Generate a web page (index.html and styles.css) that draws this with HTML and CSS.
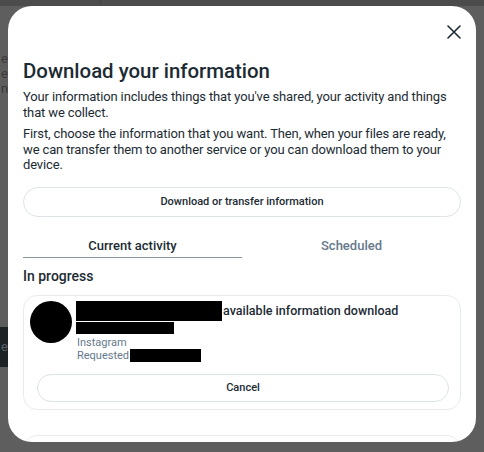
FILE: index.html
```html
<!DOCTYPE html>
<html>
<head>
<meta charset="utf-8">
<link rel="stylesheet" href="styles.css">
</head>
<body>
<div class="page">
  <div class="topbar"><span class="topbar-line"></span></div>
  <div class="behind">
    <div class="behind-text">
      <div>er</div>
      <div>ec</div>
      <div>nd</div>
    </div>
    <div class="behind-block">er</div>
  </div>
</div>
<div class="modal">
  <div class="modal-head">
    <button class="close" aria-label="Close">
      <svg width="14" height="14" viewBox="0 0 14 14"><path d="M1 1L13 13M13 1L1 13" stroke="#1c2b33" stroke-width="1.6" stroke-linecap="round"/></svg>
    </button>
  </div>
  <h1 class="title">Download your information</h1>
  <p class="para">Your information includes things that you've shared, your activity and things that we collect.</p>
  <p class="para">First, choose the information that you want. Then, when your files are ready, we can transfer them to another service or you can download them to your device.</p>
  <button class="pill main-btn">Download or transfer information</button>
  <div class="tabs">
    <div class="tab active">Current activity</div>
    <div class="tab">Scheduled</div>
  </div>
  <div class="section-title">In progress</div>
  <div class="card">
    <div class="card-top">
      <div class="avatar"></div>
      <div class="info">
        <div class="line1"><span class="redact r1"></span><span class="line1-text">available information download</span></div>
        <span class="redact r2"></span>
        <div class="meta first">Instagram</div>
        <div class="meta req">Requested<span class="redact r3"></span></div>
      </div>
    </div>
    <button class="pill cancel-btn">Cancel</button>
  </div>
  <div class="card next-card"></div>
</div>
</body>
</html>
```

FILE: styles.css
```css
html, body {
  margin: 0;
  padding: 0;
}
body {
  width: 484px;
  height: 452px;
  overflow: hidden;
  background: #5e5e5e;
  font-family: Roboto, "Noto Sans", sans-serif;
  color: #1c2b33;
  position: relative;
}
.page {
  height: 452px;
  display: flex;
  flex-direction: column;
}
.topbar {
  height: 6px;
  background: #4c4c4c;
}
.topbar-line {
  display: block;
  width: 1px;
  height: 6px;
  margin-left: 100px;
  background: #444;
}
.behind {
  flex: 1;
  display: flex;
  flex-direction: column;
}
.behind-text {
  margin-top: 45px;
  padding-left: 1px;
  font-size: 13px;
  line-height: 15px;
  color: #3a3a3a;
}
.behind-block {
  margin-top: 231px;
  width: 30px;
  height: 40px;
  background: #1e2326;
  color: #55606a;
  font-size: 13px;
  line-height: 40px;
  padding-left: 1px;
}
.modal {
  position: absolute;
  top: 6px;
  left: 8px;
  width: 468px;
  height: 436px;
  background: #fff;
  border-radius: 24px;
  overflow: hidden;
  box-sizing: border-box;
  padding: 0 15px;
}
.modal-head {
  height: 53px;
  display: flex;
  justify-content: flex-end;
  align-items: flex-start;
}
.close {
  border: 0;
  background: none;
  padding: 0;
  width: 14px;
  height: 14px;
  margin-top: 19px;
  margin-right: 0;
  cursor: pointer;
}
.close svg { display: block; }
.title {
  margin: 0;
  font-size: 20.4px;
  line-height: 24px;
  font-weight: 500;
  letter-spacing: 0;
}
.para {
  margin: 6px 0 0;
  font-size: 13px;
  line-height: 15.5px;
  letter-spacing: -0.14px;
}
.para + .para {
  margin-top: 6px;
}
.pill {
  display: flex;
  align-items: center;
  justify-content: center;
  width: 100%;
  border: 1px solid #dde3e9;
  border-radius: 999px;
  background: #fff;
  font-family: inherit;
  color: #1c2b33;
  font-size: 11px;
  font-weight: 500;
  box-sizing: border-box;
  padding: 0;
}
.main-btn {
  height: 30px;
  margin-top: 14px;
}
.tabs {
  display: flex;
  margin-top: 13px;
}
.tab {
  flex: 1;
  text-align: center;
  font-size: 13px;
  font-weight: 500;
  line-height: 18px;
  padding: 7px 0 2px;
  color: #65788b;
}
.tab.active {
  color: #1c2b33;
  border-bottom: 1px solid #8a949c;
}
.section-title {
  margin-top: 8px;
  font-size: 14px;
  font-weight: 500;
  line-height: 20px;
}
.card {
  margin-top: 9px;
  border: 1px solid #e8ebee;
  border-radius: 14px;
  height: 115px;
  box-sizing: border-box;
  padding: 5px 12px 0 6px;
}
.card-top {
  display: flex;
  gap: 4px;
}
.avatar {
  width: 42px;
  height: 42px;
  border-radius: 50%;
  background: #000;
  flex: none;
}
.info {
  display: flex;
  flex-direction: column;
  align-items: flex-start;
}
.line1 {
  display: flex;
  align-items: center;
  font-size: 12.5px;
  font-weight: 500;
}
.redact {
  display: block;
  background: #000;
}
.r1 { width: 146px; height: 20px; }
.r2 { width: 98px; height: 12px; margin-top: 1px; }
.r3 { width: 71px; height: 13px; margin-left: 1px; }
.line1-text { margin-left: 1px; }
.meta {
  font-size: 11px;
  line-height: 13px;
  color: #65788b;
  margin-left: 1px;
}
.meta.first {
  margin-top: 2px;
}
.meta.req {
  display: flex;
  align-items: center;
}
.cancel-btn {
  height: 28px;
  margin: 12px 0 0 7px;
  width: 412px;
}
.next-card {
  margin-top: 25px;
}
```
